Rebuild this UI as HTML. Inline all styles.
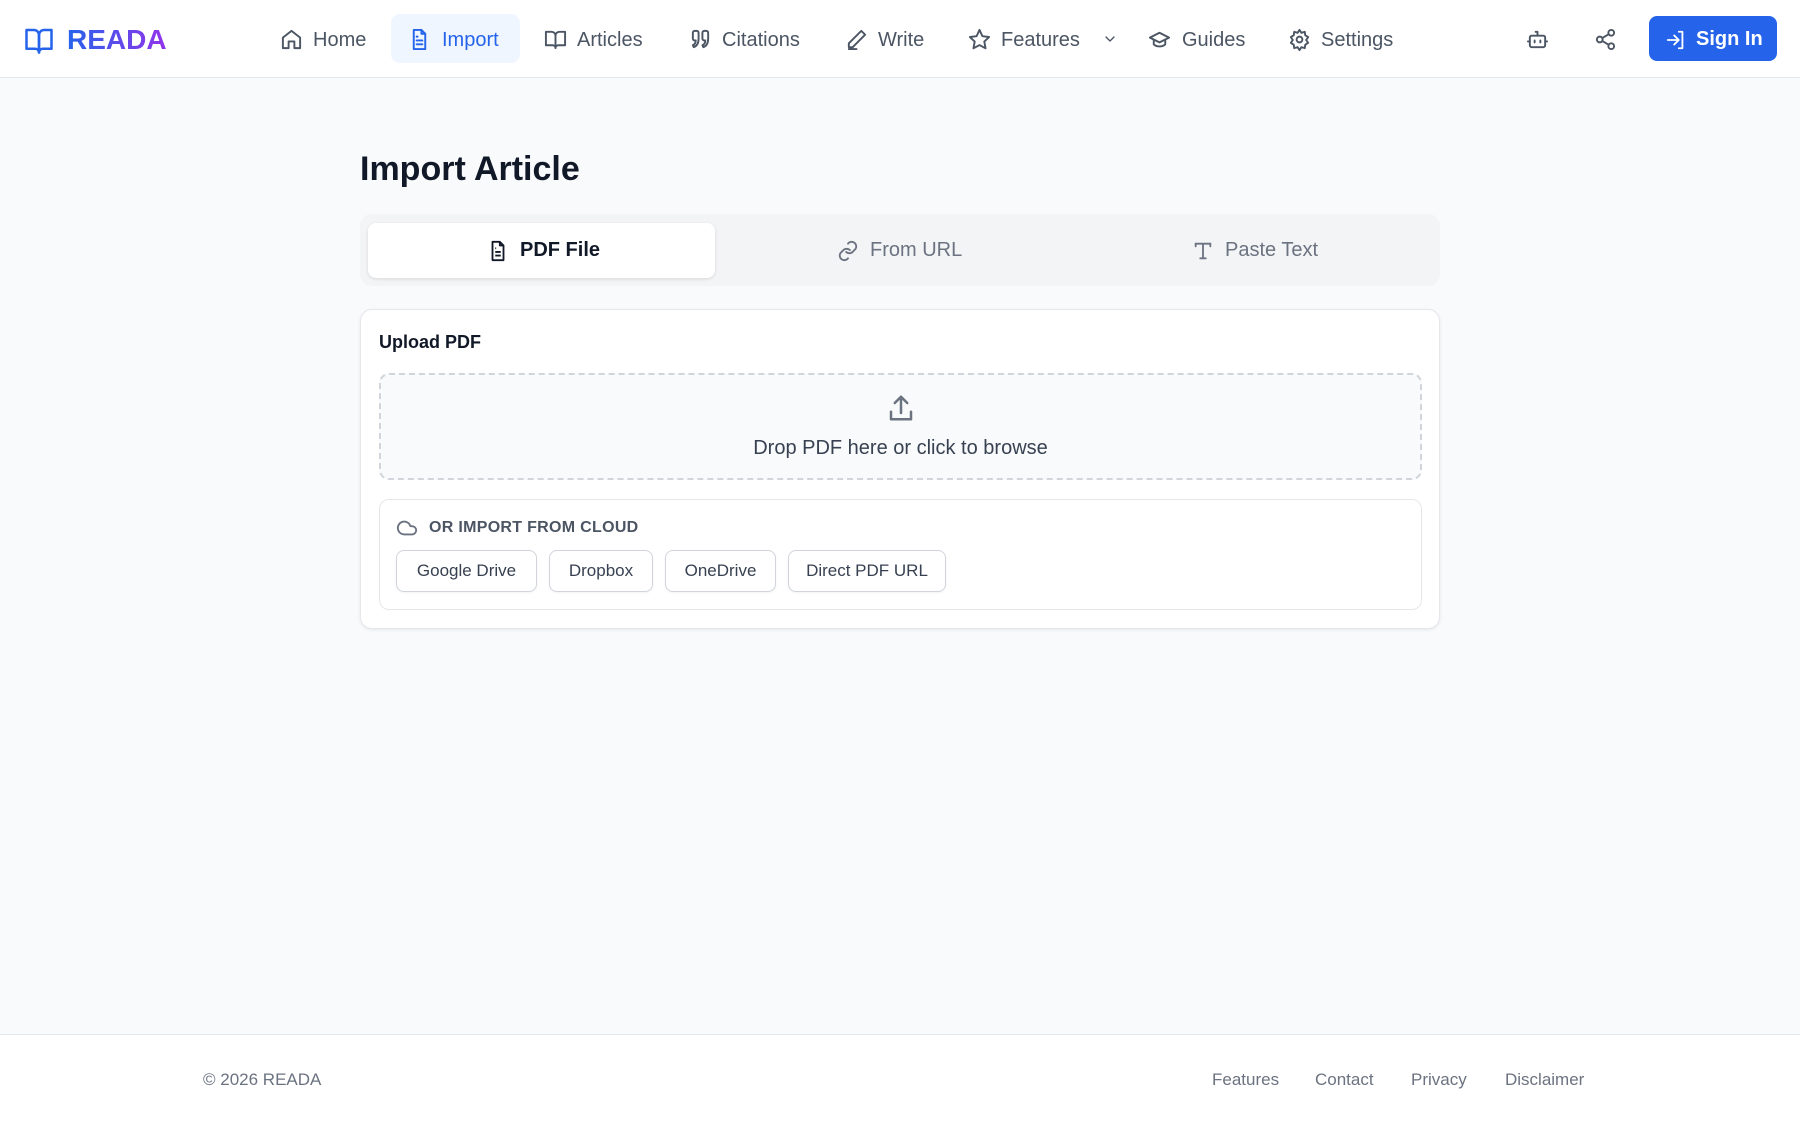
<!DOCTYPE html>
<html><head><meta charset="utf-8"><style>
*{box-sizing:border-box;margin:0;padding:0}
body{width:1800px;height:1125px;background:#f9fafb;font-family:"Liberation Sans",sans-serif;position:relative;overflow:hidden;color:#111827}
.abs{position:absolute}
header{position:absolute;left:0;top:0;width:1800px;height:78px;background:#fff;border-bottom:1px solid #e5e7eb}
.nav{position:absolute;top:1px;height:78px;display:flex;align-items:center;font-size:20px;color:#4b5563}
.ic{position:absolute;top:28px;color:#4b5563}
.ic svg{width:23px;height:23px;fill:none;stroke:currentColor;stroke-width:2;stroke-linecap:round;stroke-linejoin:round;display:block}
.btn{position:absolute;top:550px;height:42px;border:1px solid #d1d5db;border-radius:8px;background:#fff;font-size:17px;color:#374151;display:flex;align-items:center;justify-content:center;box-shadow:0 1px 2px rgba(0,0,0,.05)}
.foot{position:absolute;top:1070px;font-size:17px;color:#6b7280}
</style></head><body>
<header>
<div class="abs" style="left:23px;top:25px;color:#2563eb"><svg width="32" height="30" viewBox="0 0 24 24" fill="none" stroke="#2563eb" stroke-width="2" stroke-linejoin="round"><path d="M2 4h6a4 4 0 0 1 4 4v14a3 3 0 0 0-3-3H2z"/><path d="M22 4h-6a4 4 0 0 0-4 4v14a3 3 0 0 1 3-3h7z"/></svg></div>
<div class="abs" style="left:67px;top:24px;font-size:28px;font-weight:bold;background:linear-gradient(90deg,#2563eb,#9333ea);-webkit-background-clip:text;color:transparent">READA</div>
<div class="abs" style="left:391px;top:14px;width:129px;height:49px;background:#eff6ff;border-radius:9px"></div>
<div class="ic" style="left:280px"><svg viewBox="0 0 24 24"><path d="M3 10l9-7 9 7v11H15v-7H9v7H3z"/></svg></div>
<div class="nav" style="left:313px">Home</div>
<div class="ic" style="left:408px;color:#2563eb"><svg viewBox="0 0 24 24"><path d="M14 2H6v20h12V6z"/><path d="M14 2v4h4M9 13h6M9 17h6M9 9h1"/></svg></div>
<div class="nav" style="left:442px;color:#2563eb">Import</div>
<div class="ic" style="left:544px"><svg viewBox="0 0 24 24"><path d="M2 4h6a4 4 0 0 1 4 4v13a3 3 0 0 0-3-3H2zM22 4h-6a4 4 0 0 0-4 4v13a3 3 0 0 1 3-3h7z"/></svg></div>
<div class="nav" style="left:577px">Articles</div>
<div class="ic" style="left:689px"><svg viewBox="0 0 24 24"><path d="M4 5a2 2 0 0 1 2-2h2a2 2 0 0 1 2 2v6c0 5-2 8-5 9l-1-2c2-1 3-3 3-5H6a2 2 0 0 1-2-2zM14 5a2 2 0 0 1 2-2h2a2 2 0 0 1 2 2v6c0 5-2 8-5 9l-1-2c2-1 3-3 3-5h-1a2 2 0 0 1-2-2z"/></svg></div>
<div class="nav" style="left:722px">Citations</div>
<div class="ic" style="left:845px"><svg viewBox="0 0 24 24"><path d="M17 3l4 4L8 20H4v-4zM4 22h8"/></svg></div>
<div class="nav" style="left:878px">Write</div>
<div class="ic" style="left:968px"><svg viewBox="0 0 24 24"><path d="M12 2l3 6.5 7 .9-5 4.8 1.3 7L12 17.8 5.7 21.2 7 14.2 2 9.4l7-.9z"/></svg></div>
<div class="nav" style="left:1001px">Features</div>
<div class="ic" style="left:1102px;top:31px"><svg viewBox="0 0 24 24" style="width:16px;height:16px"><path d="M6 9l6 6 6-6"/></svg></div>
<div class="ic" style="left:1148px"><svg viewBox="0 0 24 24"><path d="M2 10l10-5 10 5-10 5zM6 12v5c3 3 9 3 12 0v-5"/></svg></div>
<div class="nav" style="left:1182px">Guides</div>
<div class="ic" style="left:1288px"><svg viewBox="0 0 24 24"><circle cx="12" cy="12" r="3"/><path d="M12 2l2 3 3.5-1 .5 3.5 3 2-2 3 2 3-3 2-.5 3.5-3.5-1-2 3-2-3-3.5 1L6 17.5l-3-2 2-3-2-3 3-2L6.5 4 10 5z"/></svg></div>
<div class="nav" style="left:1321px">Settings</div>
<div class="ic" style="left:1526px"><svg viewBox="0 0 24 24"><rect x="4" y="8" width="16" height="12" rx="2"/><path d="M12 8V4h-2M9 13v2M15 13v2M2 14h2M20 14h2"/></svg></div>
<div class="ic" style="left:1594px"><svg viewBox="0 0 24 24"><circle cx="18" cy="5" r="3"/><circle cx="6" cy="12" r="3"/><circle cx="18" cy="19" r="3"/><path d="M8.6 13.5l6.8 4M15.4 6.5l-6.8 4"/></svg></div>
<div class="abs" style="left:1649px;top:16px;width:128px;height:45px;background:#2563eb;border-radius:8px;color:#fff;font-size:20px;font-weight:bold;display:flex;align-items:center;padding-left:16px;padding-top:2px">
<svg width="22" height="22" viewBox="0 0 24 24" fill="none" stroke="#fff" stroke-width="2" stroke-linecap="round" stroke-linejoin="round" style="margin-right:9px"><path d="M15 3h4v18h-4M10 17l5-5-5-5M15 12H3"/></svg>Sign In</div>
</header>

<div class="abs" style="left:360px;top:150px;font-size:34px;font-weight:bold;color:#111827">Import Article</div>
<div class="abs" style="left:360px;top:214px;width:1080px;height:72px;background:#f3f4f6;border-radius:12px"></div>
<div class="abs" style="left:368px;top:223px;width:347px;height:55px;background:#fff;border-radius:8px;box-shadow:0 1px 3px rgba(0,0,0,.12)"></div>
<div class="abs" style="left:487px;top:239px;display:flex;align-items:center;font-size:20px;font-weight:bold;color:#111827"><svg width="22" height="22" viewBox="0 0 24 24" fill="none" stroke="#111827" stroke-width="2" stroke-linejoin="round" style="margin-right:11px"><path d="M14 2H6v20h12V6zM14 2v4h4M9 13h6M9 17h6M9 9h1"/></svg>PDF File</div>
<div class="abs" style="left:837px;top:239px;display:flex;align-items:center;font-size:20px;color:#6b7280"><svg width="22" height="22" viewBox="0 0 24 24" fill="none" stroke="#6b7280" stroke-width="2" stroke-linecap="round" style="margin-right:11px"><path d="M10 13a5 5 0 0 0 7 0l3-3a5 5 0 0 0-7-7l-1 1M14 11a5 5 0 0 0-7 0l-3 3a5 5 0 0 0 7 7l1-1"/></svg>From URL</div>
<div class="abs" style="left:1192px;top:239px;display:flex;align-items:center;font-size:20px;color:#6b7280"><svg width="22" height="22" viewBox="0 0 24 24" fill="none" stroke="#6b7280" stroke-width="2" stroke-linecap="round" style="margin-right:11px"><path d="M4 7V4h16v3M12 4v16M9 20h6"/></svg>Paste Text</div>

<div class="abs" style="left:360px;top:309px;width:1080px;height:320px;background:#fff;border:1px solid #e5e7eb;border-radius:12px;box-shadow:0 1px 3px rgba(0,0,0,.08)"></div>
<div class="abs" style="left:379px;top:332px;font-size:18px;font-weight:bold;color:#111827">Upload PDF</div>
<div class="abs" style="left:379px;top:373px;width:1043px;height:107px;border:2px dashed #d1d5db;border-radius:10px;background:#f9fafb"></div>
<div class="abs" style="left:886px;top:393px"><svg width="30" height="30" viewBox="0 0 24 24" fill="none" stroke="#6b7280" stroke-width="2" stroke-linecap="round" stroke-linejoin="round"><path d="M12 3v13M7 8l5-5 5 5M4 15v6h16v-6"/></svg></div>
<div class="abs" style="left:379px;width:1043px;top:437px;text-align:center;font-size:20px;color:#374151">Drop PDF here or click to browse</div>
<div class="abs" style="left:379px;top:499px;width:1043px;height:111px;border:1px solid #e5e7eb;border-radius:10px"></div>
<div class="abs" style="left:396px;top:517px;display:flex;align-items:center;font-size:16px;font-weight:bold;color:#4b5563;letter-spacing:.3px"><svg width="22" height="22" viewBox="0 0 24 24" fill="none" stroke="#6b7280" stroke-width="2" stroke-linejoin="round" style="margin-right:11px"><path d="M17.5 19H9a7 7 0 1 1 6.7-9h1.8a4.5 4.5 0 1 1 0 9z"/></svg>OR IMPORT FROM CLOUD</div>
<div class="btn" style="left:396px;width:141px">Google Drive</div>
<div class="btn" style="left:549px;width:104px">Dropbox</div>
<div class="btn" style="left:665px;width:111px">OneDrive</div>
<div class="btn" style="left:788px;width:158px">Direct PDF URL</div>

<div class="abs" style="left:0;top:1034px;width:1800px;height:91px;background:#fff;border-top:1px solid #e5e7eb"></div>
<div class="foot" style="left:203px">© 2026 READA</div>
<div class="foot" style="left:1212px">Features</div>
<div class="foot" style="left:1315px">Contact</div>
<div class="foot" style="left:1411px">Privacy</div>
<div class="foot" style="left:1505px">Disclaimer</div>
</body></html>
